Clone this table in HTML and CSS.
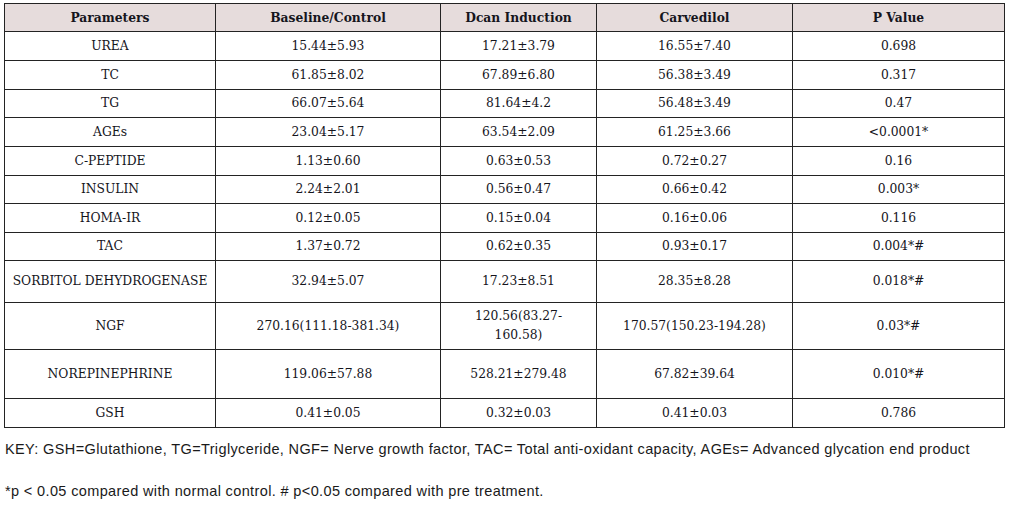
FILE: index.html
```html
<!DOCTYPE html>
<html>
<head>
<meta charset="utf-8">
<link rel="stylesheet" href="styles.css">
</head>
<body>
<div class="page">
<table class="data">
<colgroup>
<col class="c1"><col class="c2"><col class="c3"><col class="c4"><col class="c5">
</colgroup>
<thead>
<tr class="head"><th>Parameters</th><th>Baseline/Control</th><th>Dcan Induction</th><th>Carvedilol</th><th>P Value</th></tr>
</thead>
<tbody>
<tr class="r29"><td>UREA</td><td>15.44±5.93</td><td>17.21±3.79</td><td>16.55±7.40</td><td>0.698</td></tr>
<tr class="r29"><td>TC</td><td>61.85±8.02</td><td>67.89±6.80</td><td>56.38±3.49</td><td>0.317</td></tr>
<tr class="r28"><td>TG</td><td>66.07±5.64</td><td>81.64±4.2</td><td>56.48±3.49</td><td>0.47</td></tr>
<tr class="r29"><td>AGEs</td><td>23.04±5.17</td><td>63.54±2.09</td><td>61.25±3.66</td><td>&lt;0.0001*</td></tr>
<tr class="r29"><td>C-PEPTIDE</td><td>1.13±0.60</td><td>0.63±0.53</td><td>0.72±0.27</td><td>0.16</td></tr>
<tr class="r28"><td>INSULIN</td><td>2.24±2.01</td><td>0.56±0.47</td><td>0.66±0.42</td><td>0.003*</td></tr>
<tr class="r29"><td>HOMA-IR</td><td>0.12±0.05</td><td>0.15±0.04</td><td>0.16±0.06</td><td>0.116</td></tr>
<tr class="r28"><td>TAC</td><td>1.37±0.72</td><td>0.62±0.35</td><td>0.93±0.17</td><td>0.004*#</td></tr>
<tr class="r42"><td>SORBITOL DEHYDROGENASE</td><td>32.94±5.07</td><td>17.23±8.51</td><td>28.35±8.28</td><td>0.018*#</td></tr>
<tr class="r47"><td>NGF</td><td>270.16(111.18-381.34)</td><td>120.56(83.27-<br>160.58)</td><td>170.57(150.23-194.28)</td><td>0.03*#</td></tr>
<tr class="r49"><td>NOREPINEPHRINE</td><td>119.06±57.88</td><td>528.21±279.48</td><td>67.82±39.64</td><td>0.010*#</td></tr>
<tr class="r29"><td>GSH</td><td>0.41±0.05</td><td>0.32±0.03</td><td>0.41±0.03</td><td>0.786</td></tr>
</tbody>
</table>
<p class="key">KEY: GSH=Glutathione, TG=Triglyceride, NGF= Nerve growth factor, TAC= Total anti-oxidant capacity, AGEs= Advanced glycation end product</p>
<p class="note">*p &lt; 0.05 compared with normal control. # p&lt;0.05 compared with pre treatment.</p>
</div>
</body>
</html>
```
FILE: styles.css
```css
html, body {
  margin: 0;
  padding: 0;
  background: #ffffff;
}
.page {
  padding: 3px 0 0 4px;
}
.data {
  border-collapse: collapse;
  table-layout: fixed;
  width: 1000px;
  font-family: "DejaVu Serif", "Liberation Serif", serif;
  font-size: 12.3px;
  color: #15151c;
}
.c1 { width: 211px; }
.c2 { width: 225px; }
.c3 { width: 156px; }
.c4 { width: 196px; }
.c5 { width: 212px; }
.data th, .data td {
  border: 1px solid #232323;
  text-align: center;
  vertical-align: middle;
  padding: 0 4px;
  line-height: 19px;
}
.data th {
  background: #e6dcdc;
  font-weight: bold;
  height: 27px;
}
.r28 td { height: 27px; }
.r29 td { height: 28px; }
.r42 td { height: 41px; }
.r47 td { height: 46px; }
.r49 td { height: 48px; }
.key, .note {
  margin: 0;
  font-family: "Liberation Sans", Arial, sans-serif;
  font-size: 14.5px;
  letter-spacing: 0.37px;
  color: #1a1a1a;
  padding-left: 1px;
}
.key {
  margin-top: 12px;
  line-height: 18px;
}
.note {
  margin-top: 24px;
  line-height: 18px;
}
```
